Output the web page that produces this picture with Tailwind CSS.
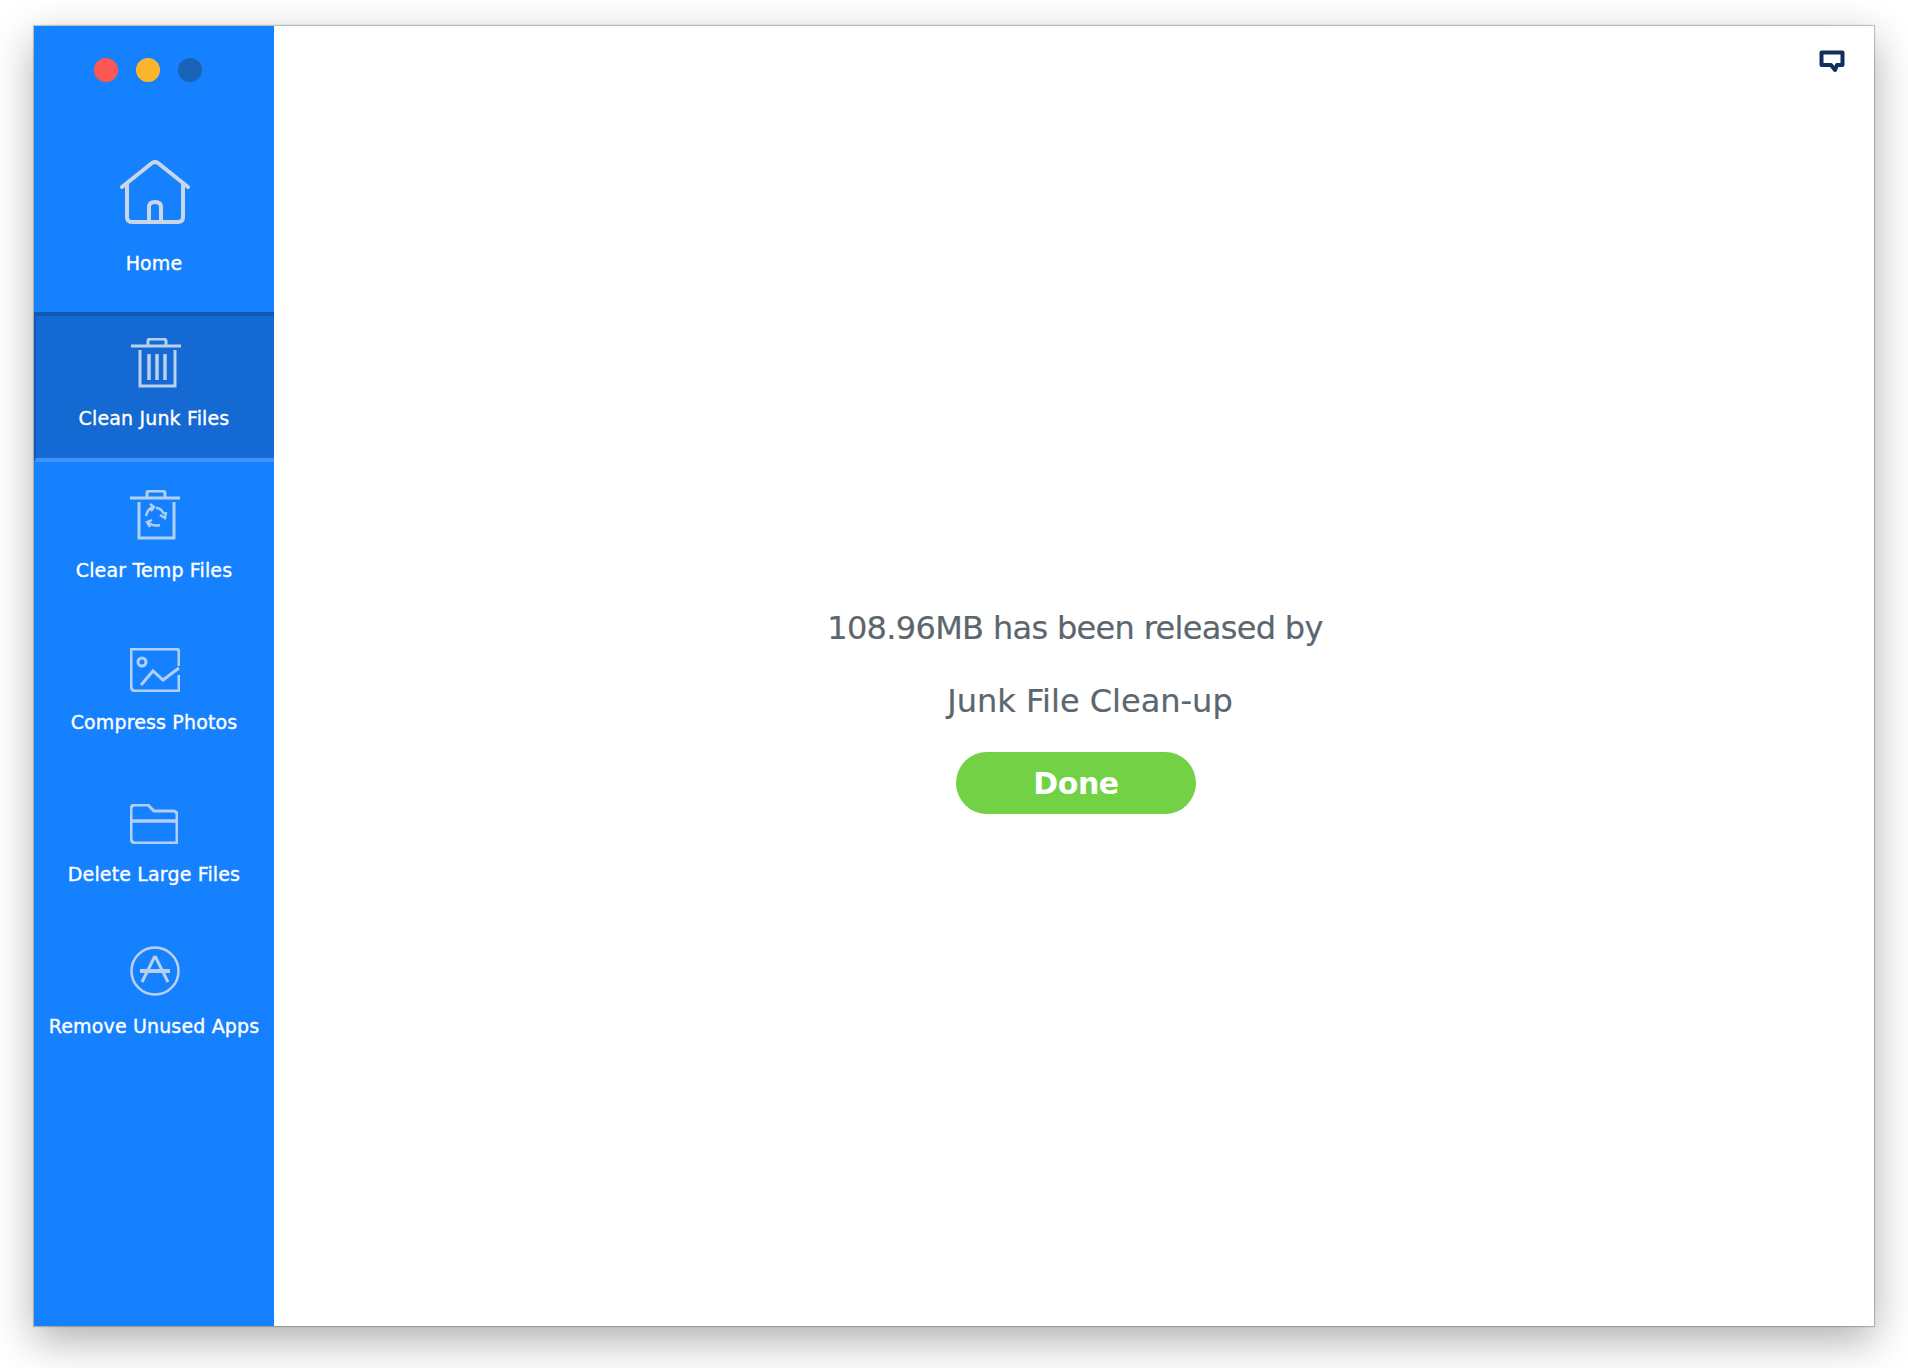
<!DOCTYPE html>
<html>
  <head>
    <meta charset="UTF-8" />
    <title>Clean Junk Files</title>
    <script src="https://cdn.jsdelivr.net/npm/@tailwindcss/browser@4"></script>
  </head>
  <body class="bg-white font-['DejaVu_Sans',sans-serif]">
    <div class="h-[1368px] pt-[26px] pl-[34px] overflow-hidden">
      <div class="relative flex w-[1840px] h-[1300px] bg-white shadow-[0_0_1px_1px_rgba(0,0,0,0.2),0_14px_40px_rgba(0,0,0,0.32)]">
        <!-- sidebar -->
        <div class="flex flex-col w-[240px] bg-[#1681ff] text-white text-[19px] leading-6 tracking-[0.15px] [-webkit-text-stroke:0.35px_white]">
          <div class="h-[286px] flex flex-col items-center">
            <div class="flex gap-[18px] mt-[32px] mr-[12px]">
              <span class="w-6 h-6 rounded-full bg-[#fc5753]"></span>
              <span class="w-6 h-6 rounded-full bg-[#fdb52e]"></span>
              <span class="w-6 h-6 rounded-full bg-[#1a62b8]"></span>
            </div>
            <svg class="mt-[78px] ml-[2px]" width="70" height="64" viewBox="0 0 70 64" fill="none" stroke="#cbd6e4" stroke-width="4" stroke-linecap="round" stroke-linejoin="round">
              <path d="M2 27 L32 3 Q35 1 38 3 L68 27" />
              <path d="M7 25 V57 Q7 62 12 62 H58 Q63 62 63 57 V25" />
              <path d="M29 61 V47 Q29 42 35 42 Q41 42 41 47 V61" />
            </svg>
            <span class="mt-[27px]">Home</span>
          </div>

          <div class="h-[150px] mb-[2px] pr-[2px] flex flex-col items-center bg-[#1469d3] border-t-4 border-t-[#0f59b0] border-b-4 border-b-[#3e93ff] border-l-2 border-l-[#0f59b0]">
            <svg class="mt-[22px] ml-[4px]" width="50" height="50" viewBox="0 0 50 50" fill="none" stroke="#b9d1ef" stroke-width="3">
              <path d="M0 8 H50" />
              <path d="M17 7 V3 Q17 1 19 1 H32 Q35 1 35 3 V7" />
              <path d="M9 12 V48 H44 V12" />
              <path d="M18 16 V42 M26 16 V42 M34 16 V42" stroke-width="3.5" />
            </svg>
            <span class="mt-[18px]">Clean Junk Files</span>
          </div>

          <div class="h-[152px] flex flex-col items-center">
            <svg class="mt-[26px] ml-[2px]" width="50" height="50" viewBox="0 0 50 50" fill="none" stroke="#b2cff5" stroke-width="3">
              <path d="M0 8 H50" />
              <path d="M17 7 V3 Q17 1 19 1 H32 Q35 1 35 3 V7" />
              <path d="M9 12 V48 H44 V12" />
              <path d="M16 26 Q17 19 23 17 M20 14 L24 17 L21 21 M34 24 Q31 18 26 18 M36 22 L35 28 L30 25 M30 35 Q23 37 18 32 M22 30 L17 32 L20 37" stroke-width="2.4" />
            </svg>
            <span class="mt-[18px]">Clear Temp Files</span>
          </div>

          <div class="h-[152px] flex flex-col items-center">
            <svg class="mt-[32px] ml-[2px]" width="50" height="44" viewBox="0 0 50 44" fill="none" stroke="#b2cff5" stroke-width="3">
              <path d="M49 18 V4 Q49 1 46 1 H1 V38 Q1 43 6 43 H49 V27" />
              <circle cx="12" cy="14" r="4" />
              <path d="M11 37 L23 23 L33 32 L49 20" />
            </svg>
            <span class="mt-[18px]">Compress Photos</span>
          </div>

          <div class="h-[152px] flex flex-col items-center">
            <svg class="mt-[36px]" width="48" height="40" viewBox="0 0 48 40" fill="none" stroke="#b2cff5" stroke-width="3">
              <path d="M1 5 Q1 1 5 1 H18 L24 7 H43 Q47 7 47 11 V39 H6 Q1 39 1 34 Z" />
              <path d="M1 17 H47" stroke-width="3.5" />
            </svg>
            <span class="mt-[18px]">Delete Large Files</span>
          </div>

          <div class="h-[152px] flex flex-col items-center">
            <svg class="mt-[26px] ml-[2px]" width="50" height="50" viewBox="0 0 50 50" fill="none" stroke="#b9d1ef" stroke-width="2.5">
              <circle cx="25" cy="25" r="23.5" />
              <path d="M25 10 L12 36 M25 10 L38 36" stroke-width="3" />
              <path d="M10 25 H40" stroke-width="4" />
            </svg>
            <span class="mt-[18px]">Remove Unused Apps</span>
          </div>
        </div>

        <!-- main -->
        <div class="flex-1 flex flex-col items-center pt-[580px] text-[#5b666e] text-[32px] [-webkit-text-stroke:0.2px_#5b666e]">
          <p class="h-[44px] leading-[44px] tracking-[-0.67px] ml-[2px]">108.96MB has been released by</p>
          <p class="h-[44px] leading-[44px] mt-[29px] ml-[32px]">Junk File Clean-up</p>
          <button type="button" class="w-[240px] h-[62px] mt-[29px] ml-[4px] rounded-full bg-[#72d144] text-white text-[30px] tracking-[-0.4px] font-bold [-webkit-text-stroke:0]">Done</button>
        </div>

        <svg class="absolute top-[24px] right-[29px]" width="26" height="23" viewBox="0 0 26 23" fill="none">
          <path d="M2.5 2.5 H23.5 V15 H18 L16 20 L12 15 H2.5 Z" stroke="#0f2f5c" stroke-width="4" stroke-linejoin="round" />
        </svg>
      </div>
    </div>
  </body>
</html>
